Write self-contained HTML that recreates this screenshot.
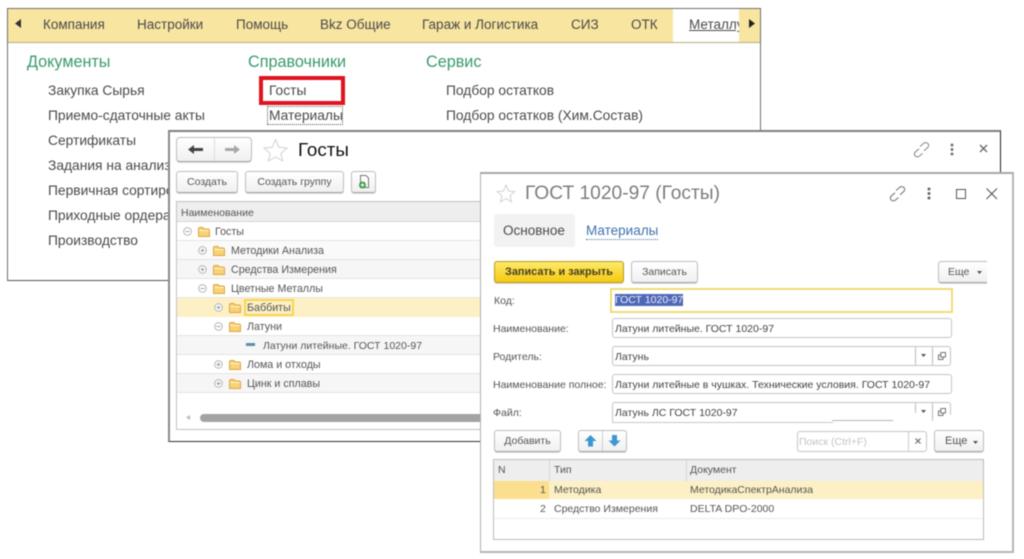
<!DOCTYPE html>
<html><head><meta charset="utf-8">
<style>
html,body{margin:0;padding:0;background:#fff}
#p{position:relative;width:1024px;height:559px;overflow:hidden;background:#fff;font-family:"Liberation Sans",sans-serif;color:#444;filter:blur(.4px)}
.t{position:absolute;white-space:nowrap;line-height:16px}
.b{position:absolute;box-sizing:border-box}
.m{font-size:13.5px;color:#4a4a4a;margin-top:1px}
.l{font-size:13.8px}
.g{font-size:16.2px;color:#3a9a6c;margin-top:1px}
.n{font-size:10.7px;color:#555;margin-top:1px}
.btn{position:absolute;box-sizing:border-box;border:1px solid #bdbdbd;border-bottom-color:#a5a5a5;border-radius:3px;background:linear-gradient(#fff,#f0f0f0);font-size:10.5px;color:#555;text-align:center;box-shadow:0 1px 0 #d8d8d8}
.row{position:absolute;left:177px;width:304px;height:19px;box-sizing:border-box;border-bottom:1px solid #e4e4e4}
.inp{position:absolute;box-sizing:border-box;background:#fff;border:1px solid #c4c4c4;border-radius:3px;left:612px;width:340px;height:20px;font-size:10.5px;color:#444;line-height:20px;padding-left:2px;white-space:nowrap;overflow:hidden}
.sep{position:absolute;width:1px;background:#bbb}
svg{position:absolute;overflow:visible}
</style></head><body><div id="p">

<!-- Window 1 -->
<div class="b" style="left:7px;top:8px;width:754px;height:273px;border:1px solid #6f6f6f;border-bottom-color:#555;background:#fff"></div>
<div class="b" style="left:8px;top:9px;width:752px;height:34px;background:#f8e5a0;border-bottom:1px solid #b8ad80"></div>
<div class="b" style="left:673px;top:9px;width:66px;height:33px;background:#fff"></div>
<svg style="left:15px;top:19px" width="8" height="10"><path d="M6 0L0 4.500L6 9Z" fill="#333"/></svg>
<svg style="left:749px;top:19px" width="8" height="10"><path d="M0 0L6 4.500L0 9Z" fill="#222"/></svg>
<div class="t m" style="left:43px;top:16px">Компания</div>
<div class="t m" style="left:137px;top:16px">Настройки</div>
<div class="t m" style="left:236px;top:16px">Помощь</div>
<div class="t m" style="left:320px;top:16px">Bkz Общие</div>
<div class="t m" style="left:422px;top:16px">Гараж и Логистика</div>
<div class="t m" style="left:571px;top:16px">СИЗ</div>
<div class="t m" style="left:631px;top:16px">ОТК</div>
<div class="b" style="left:689px;top:9px;width:50px;height:33px;overflow:hidden"><div class="t m" style="left:0;top:7px;text-decoration:underline">Металлургия</div></div>

<div class="t g" style="left:27px;top:53px">Документы</div>
<div class="t g" style="left:248px;top:53px">Справочники</div>
<div class="t g" style="left:426px;top:53px">Сервис</div>

<div class="t m l" style="left:48px;top:82px">Закупка Сырья</div>
<div class="t m l" style="left:48px;top:107px">Приемо-сдаточные акты</div>
<div class="t m l" style="left:48px;top:132px">Сертификаты</div>
<div class="t m l" style="left:48px;top:157px">Задания на анализ</div>
<div class="t m l" style="left:48px;top:182px">Первичная сортировка</div>
<div class="t m l" style="left:48px;top:207px">Приходные ордера</div>
<div class="t m l" style="left:48px;top:232px">Производство</div>

<div class="t m l" style="left:269px;top:82px">Госты</div>
<div class="b" style="left:259px;top:76px;width:86px;height:29px;border:4px solid #e0141f"></div>
<div class="t m l" style="left:269px;top:107px">Материалы</div>
<div class="b" style="left:267px;top:106px;width:76px;height:19px;border:1px dotted #555"></div>

<div class="t m l" style="left:446px;top:82px">Подбор остатков</div>
<div class="t m l" style="left:446px;top:107px">Подбор остатков (Хим.Состав)</div>

<!-- Window 2 -->
<div class="b" style="left:168px;top:130px;width:833px;height:312px;background:#fff;border:1px solid #7a7a7a;border-top:2px solid #7f7f7f;border-left:2px solid #8a8a8a;border-right-color:#222;border-bottom-color:#333"></div>

<div class="btn" style="left:176px;top:137px;width:76px;height:25px;border-radius:4px"></div>
<div class="sep" style="left:214px;top:138px;height:23px;background:#ddd"></div>
<svg style="left:188px;top:144px" width="16" height="11"><path d="M0 5.500L6 1V4H15V7H6V10Z" fill="#444"/></svg>
<svg style="left:225px;top:144px" width="16" height="11"><path d="M15 5.500L9 1V4H0V7H9V10Z" fill="#a8a8a8"/></svg>
<svg style="left:263px;top:138px" width="26" height="24"><path d="M12.500 1.500L15.800 9.300L24 10L17.800 15.500L19.700 23L12.500 19L5.300 23L7.200 15.500L1 10L9.200 9.300Z" fill="#fff" stroke="#d2d2d2" stroke-width="1"/></svg>
<div class="t" style="left:298px;top:140px;font-size:18.800px;line-height:20px;color:#111">Госты</div>
<svg style="left:913px;top:141px" width="18" height="18" fill="none" stroke="#8c8c8c" stroke-width="1.100"><path d="M7 5.500L10.500 2.500C12 1.200 14 1.400 15 2.600C16 3.800 15.800 5.500 14.600 6.600L11 9.800"/><path d="M9.500 12.500L6.500 15C5 16.200 3 16 2 14.800C1 13.600 1.200 11.800 2.500 10.800L6 7.800"/></svg>
<svg style="left:950px;top:143px" width="4" height="13" fill="#777"><circle cx="2" cy="2" r="1.500"/><circle cx="2" cy="6.500" r="1.500"/><circle cx="2" cy="11" r="1.500"/></svg>
<svg style="left:979px;top:144px" width="9" height="9" stroke="#666" stroke-width="1.300"><path d="M1 1L8 8M8 1L1 8"/></svg>

<div class="btn" style="left:176px;top:171px;width:62px;height:22px;line-height:21px">Создать</div>
<div class="btn" style="left:245px;top:171px;width:99px;height:22px;line-height:21px">Создать группу</div>
<div class="btn" style="left:351px;top:171px;width:25px;height:22px"></div>
<svg style="left:358px;top:175px" width="12" height="14"><path d="M2.500 .500H8L10.500 3V12.500H2.500Z" fill="#fff" stroke="#777"/><circle cx="4.500" cy="10" r="3.500" fill="#3d9a46"/><path d="M2.500 10H6.500M4.500 8V12" stroke="#fff"/></svg>

<div class="b" style="left:176px;top:201px;width:306px;height:229px;border:1px solid #c2c2c2;background:#fff"></div>
<div class="b" style="left:177px;top:202px;width:304px;height:20px;background:#eeeeee;border-bottom:1px solid #d5d5d5"></div>
<div class="t n" style="left:181px;top:204px;font-size:10.500px">Наименование</div>

<div class="row" style="top:222px"></div>
<div class="row" style="top:241px;background:#fafafa"></div>
<div class="row" style="top:260px;background:#f6f6f6"></div>
<div class="row" style="top:279px"></div>
<div class="row" style="top:298px;background:#fdf0c4;border-bottom:0"></div>
<div class="row" style="top:317px"></div>
<div class="row" style="top:336px;background:#f6f6f6"></div>
<div class="row" style="top:355px"></div>
<div class="row" style="top:374px;background:#f6f6f6"></div>

<svg width="0" height="0" style="position:absolute"><defs>
<g id="fo"><path d="M.500 3V10.500H11.500V4.500C11.500 3.500 11 3 10 3H6L5 1.500H2C1 1.500 .500 2 .500 3Z" fill="#f8d27a" stroke="#dca63a"/><path d="M1 4.500H11" stroke="#fff3c8"/></g>
<g id="pl"><circle cx="4.500" cy="4.500" r="3.800" fill="#fff" stroke="#adadad" stroke-width=".9"/><path d="M2.500 4.500H6.500M4.500 2.500V6.500" stroke="#999" stroke-width=".9"/></g>
<g id="mi"><circle cx="4.500" cy="4.500" r="3.800" fill="#fff" stroke="#adadad" stroke-width=".9"/><path d="M2.500 4.500H6.500" stroke="#999" stroke-width=".9"/></g>
</defs></svg>

<svg style="left:183px;top:227px" width="9" height="9"><use href="#mi"/></svg>
<svg style="left:198px;top:226px" width="12" height="12"><use href="#fo"/></svg>
<div class="t n" style="left:215px;top:223px">Госты</div>

<svg style="left:198px;top:246px" width="9" height="9"><use href="#pl"/></svg>
<svg style="left:213px;top:245px" width="12" height="12"><use href="#fo"/></svg>
<div class="t n" style="left:231px;top:242px">Методики Анализа</div>

<svg style="left:198px;top:265px" width="9" height="9"><use href="#pl"/></svg>
<svg style="left:213px;top:264px" width="12" height="12"><use href="#fo"/></svg>
<div class="t n" style="left:231px;top:261px">Средства Измерения</div>

<svg style="left:198px;top:284px" width="9" height="9"><use href="#mi"/></svg>
<svg style="left:213px;top:283px" width="12" height="12"><use href="#fo"/></svg>
<div class="t n" style="left:231px;top:280px">Цветные Металлы</div>

<svg style="left:214px;top:303px" width="9" height="9"><use href="#pl"/></svg>
<svg style="left:229px;top:302px" width="12" height="12"><use href="#fo"/></svg>
<div class="b" style="left:244px;top:299px;width:50px;height:17px;border:2px solid #f5d451"></div>
<div class="t n" style="left:247px;top:299px">Баббиты</div>

<svg style="left:214px;top:322px" width="9" height="9"><use href="#mi"/></svg>
<svg style="left:229px;top:321px" width="12" height="12"><use href="#fo"/></svg>
<div class="t n" style="left:247px;top:318px">Латуни</div>

<div class="b" style="left:246px;top:343px;width:9px;height:3px;background:#5c8fae"></div>
<div class="t n" style="left:263px;top:337px;font-size:10.500px">Латуни литейные. ГОСТ 1020-97</div>

<svg style="left:214px;top:360px" width="9" height="9"><use href="#pl"/></svg>
<svg style="left:229px;top:359px" width="12" height="12"><use href="#fo"/></svg>
<div class="t n" style="left:247px;top:356px">Лома и отходы</div>

<svg style="left:214px;top:379px" width="9" height="9"><use href="#pl"/></svg>
<svg style="left:229px;top:378px" width="12" height="12"><use href="#fo"/></svg>
<div class="t n" style="left:247px;top:375px">Цинк и сплавы</div>

<svg style="left:186px;top:415px" width="5" height="5"><path d="M4 0L0 2.500L4 5Z" fill="#bbb"/></svg>
<div class="b" style="left:200px;top:414px;width:281px;height:8px;background:#a3a3a3;border-radius:4px 0 0 4px"></div>

<!-- Window 3 -->
<div class="b" style="left:480px;top:172px;width:534px;height:381px;background:#fff;border:1px solid #b0b0b0;border-top:2px solid #a8a8a8;border-right:2px solid #b5b5b5;border-bottom:2px solid #b5b5b5"></div>

<svg style="left:496px;top:184px" width="20" height="19"><path d="M10 1L12.500 7L18.800 7.500L14 11.800L15.500 17.800L10 14.500L4.500 17.800L6 11.800L1.200 7.500L7.500 7Z" fill="#fff" stroke="#d2d2d2"/></svg>
<div class="t" style="left:525px;top:183px;font-size:19.200px;line-height:22px;color:#7d7d7d">ГОСТ 1020-97 (Госты)</div>
<svg style="left:889px;top:185px" width="17" height="18" fill="none" stroke="#777" stroke-width="1.100"><path d="M7 5.500L10.500 2.500C12 1.200 14 1.400 15 2.600C16 3.800 15.800 5.500 14.600 6.600L11 9.800"/><path d="M9.500 12.500L6.500 15C5 16.200 3 16 2 14.800C1 13.600 1.200 11.800 2.500 10.800L6 7.800"/></svg>
<svg style="left:927px;top:187px" width="4" height="13" fill="#666"><circle cx="2" cy="2" r="1.500"/><circle cx="2" cy="6.500" r="1.500"/><circle cx="2" cy="11" r="1.500"/></svg>
<div class="b" style="left:956px;top:189px;width:10px;height:10px;border:1px solid #555"></div>
<svg style="left:986px;top:188px" width="12" height="12" stroke="#555" stroke-width="1.100"><path d="M.500 .500L11 11M11 .500L.500 11"/></svg>

<div class="b" style="left:494px;top:214px;width:81px;height:33px;background:#f2f2f2;border-radius:3px"></div>
<div class="t" style="left:503px;top:223px;font-size:13.500px;color:#4a4a4a">Основное</div>
<div class="t" style="left:586px;top:223px;font-size:13.500px;color:#3f73ad;border-bottom:1px dotted #3f73ad">Материалы</div>

<div class="btn" style="left:494px;top:261px;width:130px;height:22px;line-height:21px;background:linear-gradient(#fde96a,#f5ca10);border-color:#b89a22;color:#4a4020;font-weight:bold;font-size:10.900px">Записать и закрыть</div>
<div class="btn" style="left:631px;top:261px;width:67px;height:22px;line-height:21px">Записать</div>
<div class="btn" style="left:938px;top:261px;width:49px;height:22px;line-height:21px;border-right:0;border-radius:3px 0 0 3px;text-align:left;padding-left:9px">Еще</div>
<svg style="left:977px;top:271px" width="6" height="4"><path d="M0 0H5L2.500 3Z" fill="#555"/></svg>

<div class="t n" style="left:494px;top:292px;font-size:10.500px">Код:</div>
<div class="b" style="left:610px;top:288px;width:343px;height:25px;border:2px solid #efdc78;background:#fff"></div>
<div class="b" style="left:615px;top:294px;width:68px;height:12px;background:#4f68b5"></div>
<div class="t n" style="left:615px;top:291px;color:#e8ecff;font-size:10.500px">ГОСТ 1020-97</div>

<div class="t n" style="left:493px;top:320px;font-size:10.500px">Наименование:</div>
<div class="inp" style="top:318px">Латуни литейные. ГОСТ 1020-97</div>

<div class="t n" style="left:493px;top:348px;font-size:10.500px">Родитель:</div>
<div class="inp" style="top:346px;width:339px">Латунь</div>
<div class="sep" style="left:915px;top:347px;height:18px"></div>
<div class="sep" style="left:932px;top:347px;height:18px"></div>
<svg style="left:921px;top:354px" width="6" height="4"><path d="M0 0H5L2.500 3Z" fill="#555"/></svg>
<svg style="left:938px;top:352px" width="8" height="8" fill="#fff" stroke="#666" stroke-width=".9"><rect x=".500" y="3" width="4.500" height="4.500"/><rect x="2.800" y=".500" width="4.700" height="4.500"/></svg>

<div class="t n" style="left:493px;top:376px;font-size:10.500px">Наименование полное:</div>
<div class="inp" style="top:374px">Латуни литейные в чушках. Технические условия. ГОСТ 1020-97</div>

<div class="t n" style="left:493px;top:404px;font-size:10.500px">Файл:</div>
<div class="b" style="left:612px;top:402px;width:339px;height:20px;border:1px solid #c4c4c4;border-bottom:0;border-radius:3px 3px 0 0;font-size:10.500px;line-height:20px;padding-left:2px;color:#444">Латунь ЛС ГОСТ 1020-97</div>
<div class="b" style="left:612px;top:422px;width:221px;height:1px;background:#c8c8c8"></div>
<div class="b" style="left:832px;top:420px;width:61px;height:1px;background:#b5b5b5"></div>
<div class="b" style="left:893px;top:415px;width:60px;height:10px;background:#fff"></div>
<div class="sep" style="left:915px;top:403px;height:10px"></div>
<div class="sep" style="left:932px;top:403px;height:18px"></div>
<svg style="left:921px;top:410px" width="6" height="4"><path d="M0 0H5L2.500 3Z" fill="#555"/></svg>
<svg style="left:938px;top:408px" width="8" height="8" fill="#fff" stroke="#666" stroke-width=".9"><rect x=".500" y="3" width="4.500" height="4.500"/><rect x="2.800" y=".500" width="4.700" height="4.500"/></svg>

<div class="btn" style="left:494px;top:430px;width:67px;height:22px;line-height:21px">Добавить</div>
<div class="btn" style="left:578px;top:430px;width:49px;height:22px"></div>
<div class="sep" style="left:602px;top:431px;height:20px;background:#d0d0d0"></div>
<svg style="left:584px;top:435px" width="13" height="12"><path d="M6.500 0L12.500 6H9V11.500H4V6H.500Z" fill="#3f96d2"/></svg>
<svg style="left:608px;top:435px" width="13" height="12"><path d="M6.500 11.500L12.500 5.500H9V0H4V5.500H.500Z" fill="#3f96d2"/></svg>

<div class="b" style="left:797px;top:431px;width:130px;height:21px;border:1px solid #c4c4c4;border-radius:3px;background:#fff"></div>
<div class="sep" style="left:908px;top:432px;height:19px;background:#ccc"></div>
<div class="t n" style="left:799px;top:433px;color:#c4c4c4;font-size:10.500px">Поиск (Ctrl+F)</div>
<svg style="left:915px;top:438px" width="6" height="6" stroke="#666" stroke-width="1.100"><path d="M.500 .500L5.500 5.500M5.500 .500L.500 5.500"/></svg>
<div class="btn" style="left:934px;top:430px;width:50px;height:22px;line-height:21px;text-align:left;padding-left:10px;font-size:11px">Еще</div>
<svg style="left:973px;top:441px" width="6" height="4"><path d="M0 0H5L2.500 3Z" fill="#555"/></svg>

<div class="b" style="left:493px;top:459px;width:491px;height:81px;border:1px solid #bcbcbc;background:#fff"></div>
<div class="b" style="left:494px;top:460px;width:489px;height:21px;background:#eeeeee"></div>
<div class="sep" style="left:549px;top:460px;height:21px;background:#d5d5d5"></div>
<div class="sep" style="left:686px;top:460px;height:21px;background:#d5d5d5"></div>
<div class="t n" style="left:498px;top:461px;font-size:10.500px">N</div>
<div class="t n" style="left:554px;top:461px;font-size:10.500px">Тип</div>
<div class="t n" style="left:690px;top:461px;font-size:10.500px">Документ</div>
<div class="b" style="left:494px;top:481px;width:489px;height:18px;background:#fdf0c4"></div>
<div class="b" style="left:494px;top:481px;width:55px;height:18px;background:#fbdf8e"></div>
<div class="t n" style="left:540px;top:481px;font-size:10.500px">1</div>
<div class="t n" style="left:554px;top:481px;font-size:10.500px">Методика</div>
<div class="t n" style="left:690px;top:481px;font-size:10.500px">МетодикаСпектрАнализа</div>
<div class="b" style="left:494px;top:518px;width:489px;height:1px;background:#ececec"></div>
<div class="t n" style="left:540px;top:500px;font-size:10.500px">2</div>
<div class="t n" style="left:554px;top:500px;font-size:10.500px">Средство Измерения</div>
<div class="t n" style="left:690px;top:500px;font-size:10.500px">DELTA DPO-2000</div>

</div></body></html>
